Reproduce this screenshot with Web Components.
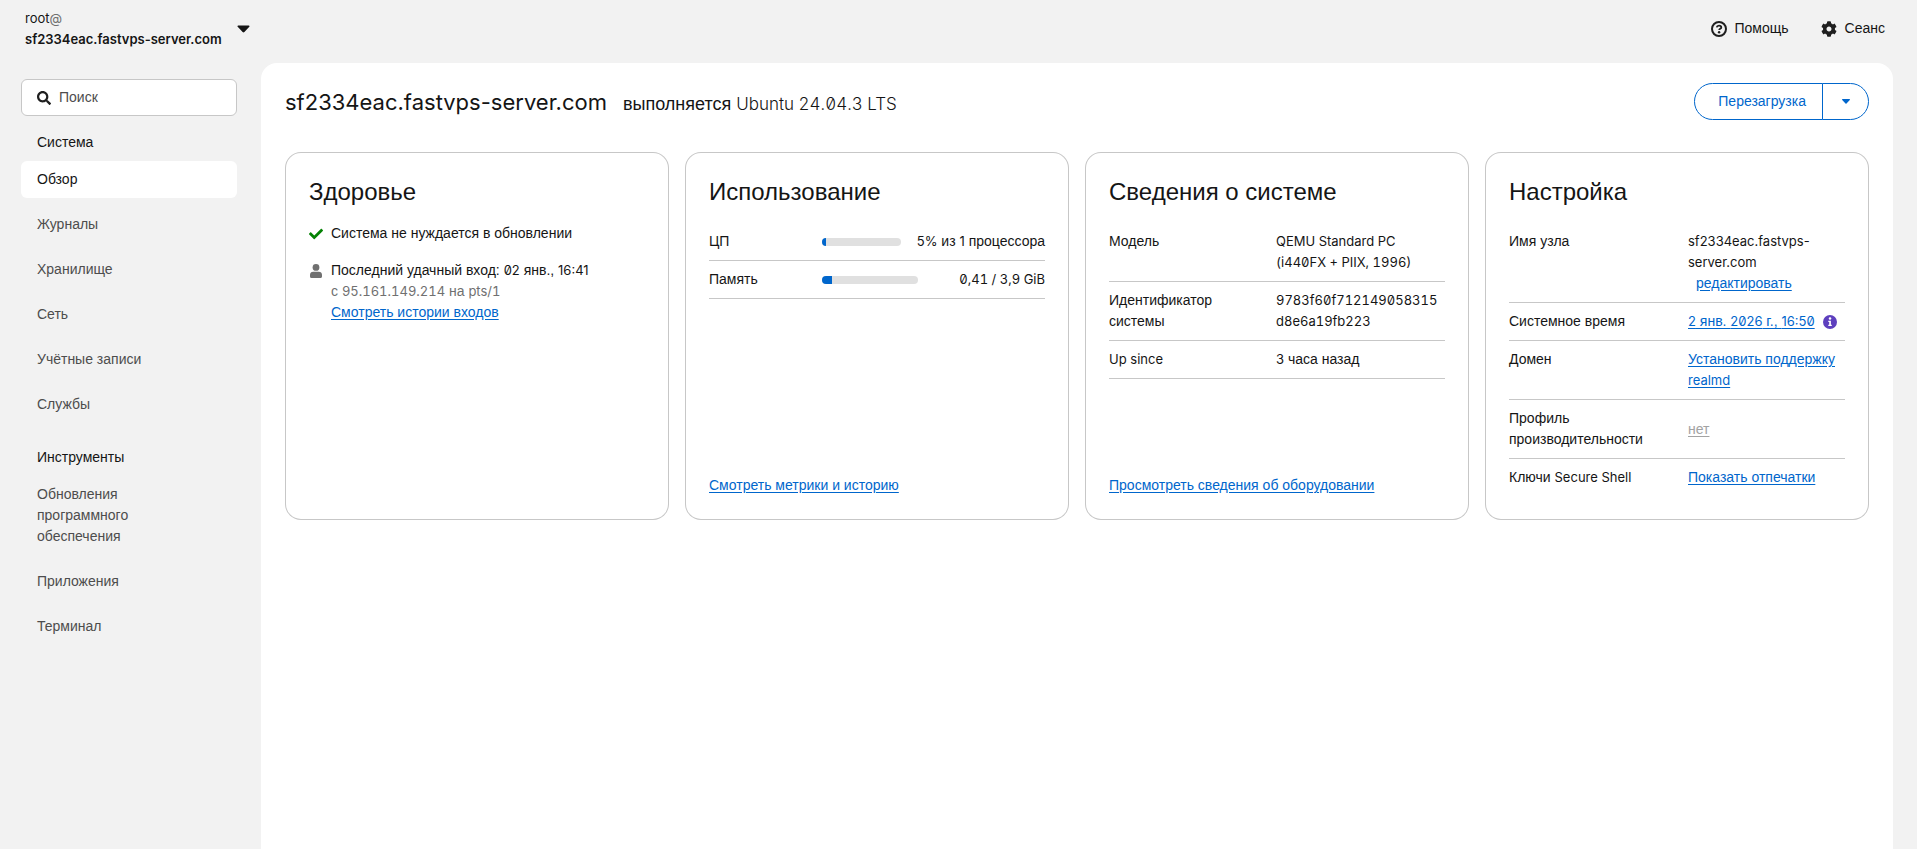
<!DOCTYPE html>
<html lang="ru">
<head>
<meta charset="utf-8">
<meta name="viewport" content="width=device-width, initial-scale=1">
<title>Обзор</title>
<style>
  body { margin: 0; background: #f2f2f2; color: #151515; font: 14px/21px "Liberation Sans", Arial, sans-serif; }
</style>
</head>
<body>
<console-app></console-app>

<script>
const define = (name, css, html) => {
  const template = document.createElement('template');
  template.innerHTML = `<style>*{box-sizing:border-box}${css}</style>${html}`;
  customElements.define(name, class extends HTMLElement {
    constructor() {
      super();
      this.attachShadow({ mode: 'open' }).append(template.content.cloneNode(true));
    }
  });
};

/* Shared rules */
const linkCss = `a{color:#06c;text-decoration:underline;text-underline-offset:2px}`;
const tableCss = `
  table{width:100%;border-collapse:collapse;table-layout:fixed}
  th,td{padding:8px 0;text-align:left;font-weight:400;vertical-align:top;border-bottom:1px solid #c7c7c7}
  th{padding-right:16px}`;

/* Latin letters and digits, with a slashed zero; "even" gives digits one width */
define('latin-text', `
  :host{font-family:Inter,sans-serif;font-size:13px;line-height:1;font-feature-settings:"zero"}
  :host([even]){font-feature-settings:"zero","tnum"}
  :host([size=title]){font-size:22px}
  :host([size=subtitle]){font-size:17px;font-weight:300}
  :host([strong]){font-weight:600}`, `<slot></slot>`);

define('page-card', `
  :host{display:flex;flex-direction:column;padding:24px;border-radius:16px;box-shadow:inset 0 0 0 1px #c7c7c7;background:#fff;min-width:0}
  h2{margin:0 0 16px;font-size:24px;line-height:31px;font-weight:400}
  .body{flex:1}`, `
  <h2><slot name="title"></slot></h2>
  <div class="body"><slot></slot></div>
  <slot name="footer"></slot>`);

define('host-switcher', `
  :host{display:block;width:261px;flex:none}
  button{display:flex;align-items:center;justify-content:space-between;width:100%;padding:8px 11px 8px 25px;border:0;background:none;color:inherit;font:inherit;text-align:left}
  span{display:block}
  .at{display:inline;color:#707070}
  svg{display:block;flex:none}`, `
  <button type="button" aria-label="Узел">
    <span>
      <span><latin-text>root<span class="at">@</span></latin-text></span>
      <span><latin-text strong>sf2334eac.fastvps-server.com</latin-text></span>
    </span>
    <svg width="13" height="8" viewBox="0 0 13 8" aria-hidden="true"><path d="M1.2.5h10.6c.7 0 1 .8.5 1.300L7.400 7a1.300 1.300 0 0 1-1.800 0L.7 1.800C.2 1.300.5.5 1.200.5z" fill="#151515"/></svg>
  </button>`);

define('header-tools', `
  :host{display:flex;gap:32px}
  button{display:flex;align-items:center;gap:8px;padding:0;border:0;background:none;color:inherit;font:inherit}
  svg{display:block}`, `
  <button type="button">
    <svg width="16" height="16" viewBox="0 0 16 16" aria-hidden="true"><circle cx="8" cy="8" r="7" fill="none" stroke="#1f1f1f" stroke-width="2"/><path d="M5.700 6.400C5.900 5.200 6.800 4.600 8 4.600c1.300 0 2.300.7 2.300 1.800 0 1.400-2.100 1.400-2.100 2.500" fill="none" stroke="#1f1f1f" stroke-width="1.800"/><circle cx="8.100" cy="11.200" r="1.200" fill="#1f1f1f"/></svg>
    Помощь
  </button>
  <button type="button">
    <svg width="16" height="16" viewBox="0 0 512 512" aria-hidden="true"><path fill="#1f1f1f" d="M487.400 315.700l-42.600-24.600c4.300-23.200 4.300-47 0-70.200l42.600-24.600c4.900-2.800 7.100-8.600 5.500-14-11.100-35.600-30-67.800-54.700-94.600-3.800-4.100-10-5.100-14.800-2.300L380.800 110c-17.900-15.400-38.500-27.300-60.800-35.100V25.800c0-5.600-3.900-10.500-9.400-11.700-36.700-8.200-74.300-7.800-109.200 0-5.500 1.200-9.400 6.100-9.400 11.700V75c-22.200 7.900-42.800 19.800-60.800 35.100L88.700 85.500c-4.900-2.800-11-1.900-14.800 2.300-24.700 26.700-43.600 58.900-54.700 94.600-1.700 5.400.6 11.200 5.500 14L67.300 221c-4.300 23.200-4.300 47 0 70.200l-42.600 24.600c-4.900 2.800-7.100 8.600-5.500 14 11.100 35.600 30 67.800 54.700 94.600 3.800 4.100 10 5.100 14.800 2.300l42.600-24.600c17.900 15.400 38.500 27.300 60.800 35.100v49.200c0 5.600 3.900 10.500 9.400 11.700 36.700 8.200 74.300 7.800 109.200 0 5.500-1.200 9.400-6.100 9.400-11.700v-49.200c22.200-7.900 42.800-19.800 60.800-35.100l42.600 24.600c4.900 2.800 11 1.900 14.800-2.300 24.700-26.700 43.600-58.900 54.700-94.600 1.500-5.500-.7-11.300-5.600-14.100zM256 336c-44.100 0-80-35.900-80-80s35.900-80 80-80 80 35.900 80 80-35.900 80-80 80z"/></svg>
    Сеанс
  </button>`);

define('nav-search', `
  :host{display:block}
  label{display:flex;align-items:center;gap:8px;height:37px;padding:0 15px;border:1px solid #c7c7c7;border-radius:6px;background:#fff}
  input{flex:1;min-width:0;padding:0;border:0;outline:0;background:none;color:#151515;font:inherit}
  input::placeholder{color:#4d4d4d;opacity:1}
  svg{display:block;flex:none}`, `
  <label>
    <svg width="14" height="14" viewBox="0 0 512 512" aria-hidden="true"><path fill="#1f1f1f" d="M505 442.700L405.300 343c-4.500-4.500-10.600-7-17-7H372c27.600-35.300 44-79.700 44-128C416 93.100 322.900 0 208 0S0 93.100 0 208s93.100 208 208 208c48.300 0 92.700-16.400 128-44v16.300c0 6.400 2.500 12.500 7 17l99.700 99.700c9.400 9.400 24.600 9.400 33.900 0l28.300-28.300c9.400-9.400 9.400-24.600.1-34zM208 336c-70.700 0-128-57.200-128-128 0-70.700 57.200-128 128-128 70.700 0 128 57.200 128 128 0 70.700-57.200 128-128 128z"/></svg>
    <input type="text" placeholder="Поиск" aria-label="Поиск">
  </label>`);

define('side-nav', `
  :host{display:block;width:261px;flex:none;padding:16px 24px 16px 21px}
  h2{margin:16px 16px 8px;font-size:14px;line-height:21px;font-weight:400}
  ul + h2{margin-top:24px}
  ul{display:flex;flex-direction:column;gap:8px;margin:0;padding:0;list-style:none}
  a{display:block;padding:8px 64px 8px 16px;border-radius:6px;color:#4d4d4d;text-decoration:none}
  a[aria-current]{background:#fff;color:#151515}`, `
  <nav>
    <nav-search></nav-search>
    <h2>Система</h2>
    <ul>
      <li><a href="#overview" aria-current="page">Обзор</a></li>
      <li><a href="#logs">Журналы</a></li>
      <li><a href="#storage">Хранилище</a></li>
      <li><a href="#network">Сеть</a></li>
      <li><a href="#accounts">Учётные записи</a></li>
      <li><a href="#services">Службы</a></li>
    </ul>
    <h2>Инструменты</h2>
    <ul>
      <li><a href="#updates">Обновления программного обеспечения</a></li>
      <li><a href="#apps">Приложения</a></li>
      <li><a href="#terminal">Терминал</a></li>
    </ul>
  </nav>`);

define('split-button', `
  :host{display:flex;height:37px;flex:none}
  button{border:1px solid #06c;background:#fff;color:#06c;font:inherit;cursor:pointer}
  .action{padding:0 16px 0 23px;border-radius:20px 0 0 20px}
  .toggle{display:flex;align-items:center;justify-content:center;width:47px;margin-left:-1px;padding:0;border-radius:0 20px 20px 0}`, `
  <button class="action" type="button"><slot></slot></button>
  <button class="toggle" type="button" aria-label="Другие действия">
    <svg width="8" height="5" viewBox="0 0 8 5" aria-hidden="true"><path d="M.6 0h6.800c.5 0 .8.600.400 1L4.500 4.600a.7.7 0 0 1-1 0L.2 1C-.2.6.1 0 .6 0z" fill="#06c"/></svg>
  </button>`);

define('page-heading', `
  :host{display:flex;justify-content:space-between;align-items:center;gap:16px;margin-bottom:32px}
  .text{display:flex;align-items:baseline;gap:16px}
  h1{margin:0;font-size:24px;line-height:31px;font-weight:400}
  p{margin:0;font-size:18px;line-height:27px}`, `
  <div class="text">
    <h1><latin-text size="title">sf2334eac.fastvps-server.com</latin-text></h1>
    <p>выполняется <latin-text size="subtitle" even>Ubuntu 24.04.3 LTS</latin-text></p>
  </div>
  <split-button>Перезагрузка</split-button>`);

define('health-card', `
  :host{display:grid}
  ${linkCss}
  ul{display:flex;flex-direction:column;gap:16px;margin:0;padding:0;list-style:none}
  li{display:flex;gap:8px}
  svg{display:block;flex:none;margin-top:4px}
  .muted{color:#707070}`, `
  <page-card>
    <span slot="title">Здоровье</span>
    <ul>
      <li>
        <svg width="14" height="14" viewBox="0 0 512 512" aria-hidden="true"><path fill="#048204" d="M173.900 439.400l-166.400-166.400c-10-10-10-26.200 0-36.200l36.200-36.200c10-10 26.200-10 36.200 0L192 312.700 432.100 72.600c10-10 26.200-10 36.200 0l36.200 36.200c10 10 10 26.200 0 36.200l-294.400 294.400c-10 10-26.200 10-36.200 0z"/></svg>
        <div>Система не нуждается в обновлении</div>
      </li>
      <li>
        <svg width="14" height="14" viewBox="0 0 14 14" aria-hidden="true"><circle cx="7" cy="3.400" r="3.400" fill="#707070"/><path d="M1 12.500v-1.700A3.300 3.300 0 0 1 4.200 7.700h5.600a3.300 3.300 0 0 1 3.200 3.100v1.700c0 .8-.6 1.500-1.500 1.500h-9A1.500 1.500 0 0 1 1 12.500z" fill="#707070"/></svg>
        <div>
          <div>Последний удачный вход: <latin-text>02</latin-text> янв., <latin-text>16:41</latin-text></div>
          <div class="muted">с <latin-text even>95.161.149.214</latin-text> на <latin-text even>pts/1</latin-text></div>
          <a href="#logins">Смотреть истории входов</a>
        </div>
      </li>
    </ul>
  </page-card>`);

define('usage-meter', `
  :host{display:flex;align-items:center;gap:16px}
  progress{appearance:none;display:block;flex:1;min-width:0;height:8px;border:0;border-radius:4px;overflow:hidden;background:#e0e0e0}
  progress::-webkit-progress-bar{background:#e0e0e0}
  progress::-webkit-progress-value{background:#06c}
  progress::-moz-progress-bar{background:#06c}
  span{min-width:50%;text-align:right;white-space:nowrap}`, `
  <progress max="100"></progress><span><slot></slot></span>`);

define('usage-card', `
  :host{display:grid}
  ${linkCss}${tableCss}
  th{width:113px}`, `
  <page-card>
    <span slot="title">Использование</span>
    <table>
      <tr><th scope="row">ЦП</th><td><usage-meter data-value="5"><latin-text>5%</latin-text> из <latin-text>1</latin-text> процессора</usage-meter></td></tr>
      <tr><th scope="row">Память</th><td><usage-meter data-value="10.500"><latin-text even>0,41 / 3,9 GiB</latin-text></usage-meter></td></tr>
    </table>
    <a slot="footer" href="#metrics">Смотреть метрики и историю</a>
  </page-card>`);

define('system-card', `
  :host{display:grid}
  ${linkCss}${tableCss}
  th{width:167px}
  td{overflow-wrap:anywhere}`, `
  <page-card>
    <span slot="title">Сведения о системе</span>
    <table>
      <tr><th scope="row">Модель</th><td><latin-text even>QEMU Standard PC (i440FX + PIIX, 1996)</latin-text></td></tr>
      <tr><th scope="row">Идентификатор системы</th><td><latin-text even>9783f60f712149058315<wbr>d8e6a19fb223</latin-text></td></tr>
      <tr><th scope="row"><latin-text>Up since</latin-text></th><td><latin-text>3</latin-text> часа назад</td></tr>
    </table>
    <a slot="footer" href="#hardware">Просмотреть сведения об оборудовании</a>
  </page-card>`);

define('config-card', `
  :host{display:grid}
  ${linkCss}${tableCss}
  th{width:179px}
  tr:last-child > *{border-bottom:0}
  td{vertical-align:middle}
  .edit{display:block;padding-left:8px}
  .time{display:flex;align-items:center;gap:8px;white-space:nowrap}
  .off{color:#a3a3a3}
  svg{display:block;flex:none}`, `
  <page-card>
    <span slot="title">Настройка</span>
    <table>
      <tr><th scope="row">Имя узла</th><td><latin-text>sf2334eac.fastvps-<wbr>server.com</latin-text> <span class="edit"><a href="#hostname">редактировать</a></span></td></tr>
      <tr><th scope="row">Системное время</th><td><div class="time"><a href="#time"><latin-text>2</latin-text> янв. <latin-text>2026</latin-text> г., <latin-text>16:50</latin-text></a>
        <svg width="14" height="14" viewBox="0 0 14 14" role="img" aria-label="Сведения"><circle cx="7" cy="7" r="7" fill="#5e40be"/><circle cx="7" cy="3.600" r="1.250" fill="#fff"/><path d="M5.300 5.700h2.600v4h.9v1.200H5.300V9.700h.9V6.900h-.9z" fill="#fff"/></svg></div></td></tr>
      <tr><th scope="row">Домен</th><td><a href="#domain">Установить поддержку <latin-text>realmd</latin-text></a></td></tr>
      <tr><th scope="row">Профиль производительности</th><td><a class="off" href="#profile" aria-disabled="true">нет</a></td></tr>
      <tr><th scope="row">Ключи <latin-text>Secure Shell</latin-text></th><td><a href="#keys">Показать отпечатки</a></td></tr>
    </table>
  </page-card>`);

define('overview-page', `
  :host{display:block;flex:1;min-width:0;margin-right:24px;padding:20px 24px 24px;border-radius:16px 16px 0 0;background:#fff}
  .cards{display:grid;grid-template-columns:repeat(auto-fit,minmax(340px,1fr));gap:16px}`, `
  <page-heading></page-heading>
  <div class="cards">
    <health-card></health-card>
    <usage-card></usage-card>
    <system-card></system-card>
    <config-card></config-card>
  </div>`);

define('console-app', `
  :host{display:flex;flex-direction:column;min-height:100vh}
  header{display:flex;justify-content:space-between;align-items:center;height:63px;padding:0 32px 6px 0}
  .columns{display:flex;flex:1}
  main{display:flex;flex:1;min-width:0}`, `
  <header><host-switcher></host-switcher><header-tools></header-tools></header>
  <div class="columns">
    <side-nav></side-nav>
    <main><overview-page></overview-page></main>
  </div>`);

/* Fill the meters from their data-value */
const usage = document.querySelector('console-app').shadowRoot
  .querySelector('overview-page').shadowRoot
  .querySelector('usage-card').shadowRoot;
for (const meter of usage.querySelectorAll('usage-meter')) {
  const bar = meter.shadowRoot.querySelector('progress');
  bar.value = Number(meter.dataset.value);
  bar.setAttribute('aria-label', meter.closest('tr').querySelector('th').textContent);
}
</script>
</body>
</html>
